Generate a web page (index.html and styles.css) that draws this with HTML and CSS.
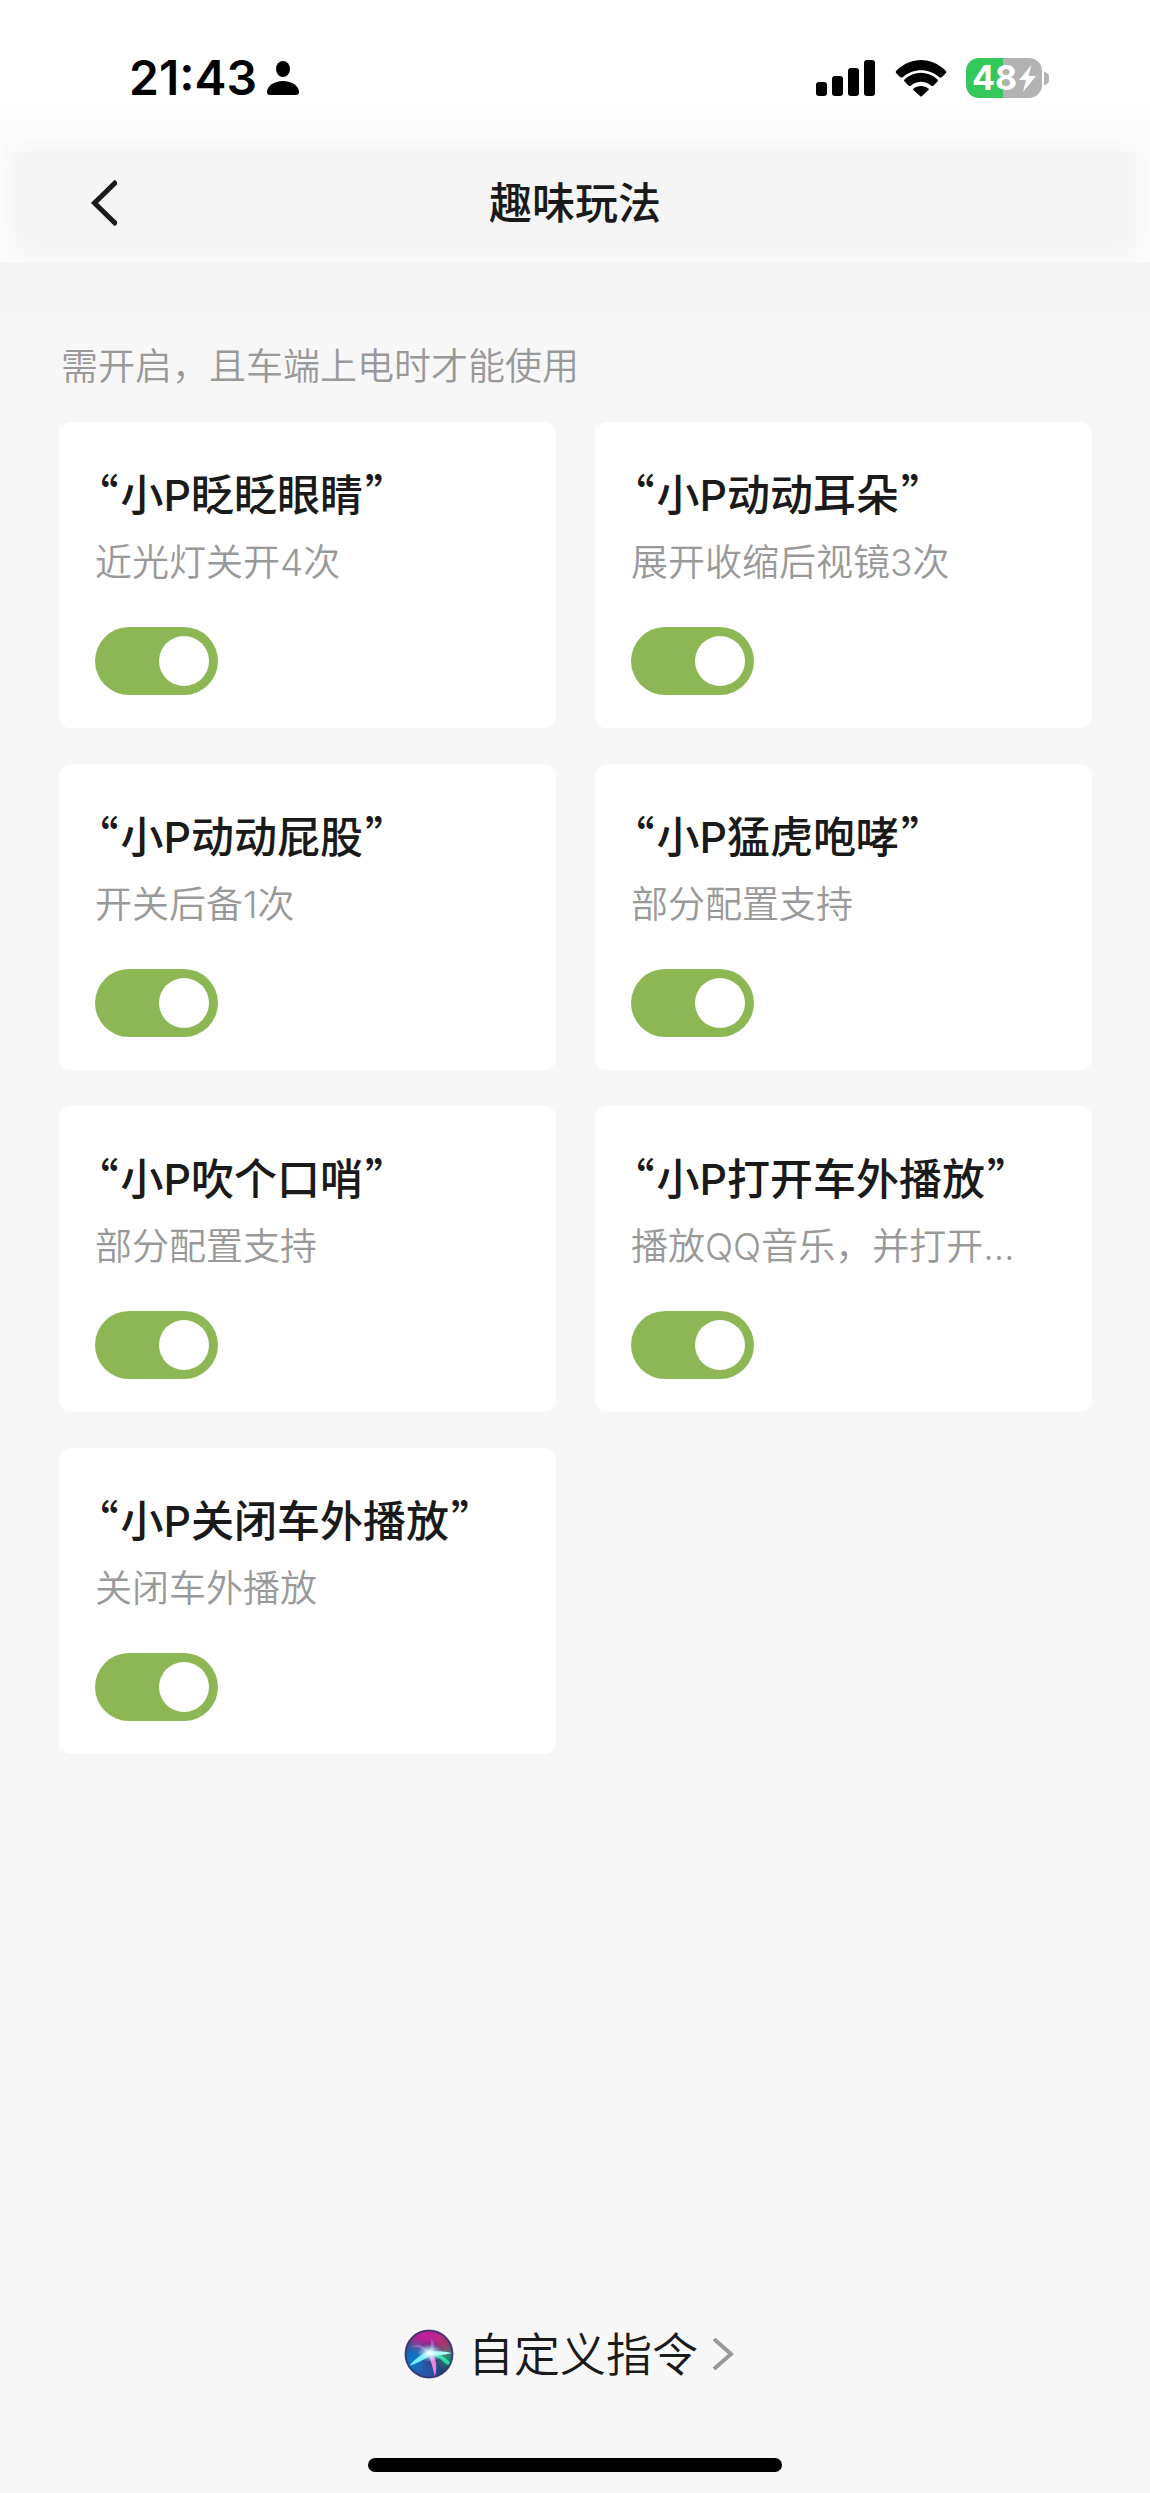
FILE: index.html
```html
<!DOCTYPE html>
<html lang="zh-CN">
<head>
<meta charset="utf-8">
<meta name="viewport" content="width=device-width, initial-scale=1">
<title>趣味玩法</title>
<link rel="stylesheet" href="styles.css">
</head>
<body>
<div class="status">
  <div class="status-left">
    <span class="time">21:43</span>
    <svg width="32" height="34" viewBox="0 0 32 34" aria-hidden="true"><ellipse cx="16" cy="8" rx="7" ry="8"/><path d="M3 34C1 34 0 33 0 31C0 25 7 20 16 20S32 25 32 31C32 33 31 34 29 34Z"/></svg>
  </div>
  <div class="status-right">
    <svg width="60" height="38" viewBox="0 0 60 38" aria-hidden="true"><rect y="23" width="11" height="14" rx="3"/><rect x="16" y="17" width="11" height="20" rx="3"/><rect x="32" y="9" width="11" height="28" rx="3"/><rect x="48" y="1" width="11" height="36" rx="3"/></svg>
    <svg width="52" height="38" viewBox="0 0 52 38" aria-hidden="true"><path d="M1.500 11.500Q0 13 1.500 14.500L5 18Q6.500 19 8 18C18 9 34 9 44 18Q45.500 19 47 18L50.500 14.500Q52 13 50.500 11.500C36-2.500 16-2.500 1.500 11.500Z"/><path d="M9.500 20.500Q8.500 21.500 9.500 22.500L13.500 26.500Q14.500 27.500 16 26.500C22 21.500 30 21.500 36 26.500Q37.500 27.500 38.500 26.500L42.500 22.500Q43.500 21.500 42.500 20.500C33 11.500 19 11.500 9.500 20.500Z"/><path d="M18.500 29.500Q17.800 30.300 18.500 31L25 37Q26 38 27 37L33.500 31Q34.200 30.300 33.500 29.500C29.500 26 22.500 26 18.500 29.500Z"/></svg>
    <div class="battery">
      <span class="battery-body">48<svg width="17" height="27" viewBox="0 0 17 27" aria-hidden="true"><path d="M12.500 0L0 15H7L4 27L17 11H9.500Z"/></svg></span>
      <span class="battery-tip"></span>
    </div>
  </div>
</div>
<header class="nav">
  <button class="back" type="button" aria-label="返回"><svg width="28" height="46" viewBox="0 0 28 46" aria-hidden="true"><path d="M27.500 1.500L5.500 23L27.500 44.500"/></svg></button>
  <h1>趣味玩法</h1>
</header>
<main>
  <p class="hint">需开启，且车端上电时才能使用</p>
  <div class="grid">
    <section class="card"><h2><label for="s1"><span class="quote">“</span>小P眨眨眼睛<span class="quote">”</span></label></h2><p>近光灯关开4次</p><input id="s1" type="checkbox" role="switch" checked></section>
    <section class="card"><h2><label for="s2"><span class="quote">“</span>小P动动耳朵<span class="quote">”</span></label></h2><p>展开收缩后视镜3次</p><input id="s2" type="checkbox" role="switch" checked></section>
    <section class="card"><h2><label for="s3"><span class="quote">“</span>小P动动屁股<span class="quote">”</span></label></h2><p>开关后备1次</p><input id="s3" type="checkbox" role="switch" checked></section>
    <section class="card"><h2><label for="s4"><span class="quote">“</span>小P猛虎咆哮<span class="quote">”</span></label></h2><p>部分配置支持</p><input id="s4" type="checkbox" role="switch" checked></section>
    <section class="card"><h2><label for="s5"><span class="quote">“</span>小P吹个口哨<span class="quote">”</span></label></h2><p>部分配置支持</p><input id="s5" type="checkbox" role="switch" checked></section>
    <section class="card"><h2><label for="s6"><span class="quote">“</span>小P打开车外播放<span class="quote">”</span></label></h2><p>播放QQ音乐，并打开…</p><input id="s6" type="checkbox" role="switch" checked></section>
    <section class="card"><h2><label for="s7"><span class="quote">“</span>小P关闭车外播放<span class="quote">”</span></label></h2><p>关闭车外播放</p><input id="s7" type="checkbox" role="switch" checked></section>
  </div>
</main>
<footer>
  <a class="custom" href="#custom">
    <svg width="50" height="50" viewBox="0 0 50 50" aria-hidden="true">
      <defs>
        <clipPath id="orb"><circle cx="25" cy="25" r="24"/></clipPath>
        <filter id="soft" x="-50%" y="-50%" width="200%" height="200%"><feGaussianBlur stdDeviation="4"/></filter>
        <filter id="fine" x="-50%" y="-50%" width="200%" height="200%"><feGaussianBlur stdDeviation="0.7"/></filter>
        <radialGradient id="glow"><stop offset="0" stop-color="#fff"/><stop offset=".35" stop-color="#d4fbff" stop-opacity=".8"/><stop offset="1" stop-color="#8ceeff" stop-opacity="0"/></radialGradient>
      </defs>
      <g clip-path="url(#orb)">
        <rect width="50" height="50" fill="#3a3c7c"/>
        <g filter="url(#soft)"><ellipse cx="24" cy="7" rx="19" ry="9" fill="#c71c9b"/><ellipse cx="39" cy="14" rx="8" ry="7" fill="#b93465"/><ellipse cx="9" cy="31" rx="11" ry="14" fill="#0874c4"/><ellipse cx="24" cy="43" rx="10" ry="7" fill="#2759b0"/><ellipse cx="44" cy="29" rx="8" ry="7" fill="#0c9a78"/><ellipse cx="40" cy="41" rx="8" ry="7" fill="#234269"/></g>
        <g filter="url(#fine)"><path d="M24 25Q16 16 7 18Q18 12 25 24Q28 14 27 9Q34 18 27 24Z" fill="#b879db" opacity=".6"/><path d="M25 22Q13 27 5 37Q17 33 27 26Z" fill="#77ecff"/><path d="M24 24Q28 35 31 48Q35 32 27 23Z" fill="#ed83dc"/><path d="M26 22Q35 22 46 33Q46 38 41 34Q34 27 26 26Z" fill="#35d7a2"/><path d="M25 23Q37 21 48 24Q38 27 26 26Z" fill="#a9fff1"/></g>
        <ellipse cx="26" cy="24" rx="13" ry="9" fill="url(#glow)"/>
      </g>
      <circle cx="25" cy="25" r="23.500" fill="none" stroke="#353268" stroke-width="2" opacity=".75"/>
    </svg>
    <span>自定义指令</span>
    <svg class="chevron" width="22" height="32" viewBox="0 0 22 32" aria-hidden="true"><path d="M2 1L19 16L2 31"/></svg>
  </a>
  <div class="home"></div>
</footer>
</body>
</html>
```
FILE: styles.css
```css
* { box-sizing: border-box; }
body {
  margin: 0;
  min-height: 100vh;
  display: flex;
  flex-direction: column;
  background: #f7f7f7;
  color: #1a1a1a;
  font-family: Inter, "Noto Sans CJK SC", sans-serif;
}
h1, h2, p { margin: 0; }
svg { display: block; flex: none; }
.status {
  height: 130px;
  padding: 48px 101px 22px 129px;
  display: flex;
  justify-content: space-between;
  align-items: center;
  background: linear-gradient(#fff 80%, #fcfcfc);
  color: #000;
}
.status-left { display: flex; align-items: center; gap: 10px; }
.time { font-size: 48px; line-height: 60px; font-weight: 600; }
.status-right { display: flex; align-items: center; gap: 19px; }
.battery { display: flex; align-items: center; gap: 2px; }
.battery-body {
  width: 76px;
  height: 40px;
  border-radius: 13px;
  display: flex;
  align-items: center;
  justify-content: center;
  gap: 2px;
  background: linear-gradient(90deg, #34c759 49%, #b3b3b3 49%);
  color: #fff;
  font-size: 34px;
  line-height: 40px;
  font-weight: 700;
}
.battery-body svg { fill: #fff; }
.battery-tip { width: 5px; height: 13px; border-radius: 0 6px 6px 0; background: #b3b3b3; }
.nav {
  height: 132px;
  padding: 14px 89px 0;
  display: grid;
  grid-template-columns: 28px 1fr 28px;
  align-items: center;
  background: #f5f5f5;
  box-shadow: inset 0 0 32px #fdfdfd, inset 0 10px 24px #fdfdfd;
}
.back { padding: 0; border: 0; background: none; }
.back path { fill: none; stroke: #1a1a1a; stroke-width: 5; }
.nav h1 { text-align: center; font-size: 43px; line-height: 60px; font-weight: 500; }
main { padding: 75px 58px 60px 59px; background: linear-gradient(#f4f4f4, #f7f7f7 80px); }
.hint { padding-left: 2px; margin-bottom: 25px; font-size: 37px; line-height: 60px; font-weight: 350; color: #999; }
.grid { display: grid; grid-template-columns: 1fr 1fr; gap: 36px 39px; }
.card {
  min-width: 0;
  padding: 43px 36px 33px;
  border-radius: 12px;
  background: #fff;
}
.card h2 { font-size: 43px; line-height: 60px; font-weight: 500; white-space: nowrap; }
/* Chinese quotation marks, set half-width beside the title */
.quote {
  margin: 0 2px;
  font-family: "Noto Sans CJK SC", sans-serif;
  font-feature-settings: "halt";
  line-height: 40px;
}
.card p { margin: 8px 0 34px; font-size: 37px; line-height: 60px; font-weight: 350; color: #999; white-space: nowrap; }
.card input {
  appearance: none;
  display: flex;
  align-items: center;
  width: 123px;
  height: 68px;
  margin: 0;
  padding: 9px;
  border-radius: 34px;
  background: #ccc;
}
.card input::before { content: ""; width: 50px; height: 50px; border-radius: 50%; background: #fff; }
.card input:checked { justify-content: flex-end; background: #8db755; }
footer {
  margin-top: auto;
  padding-bottom: 21px;
  display: flex;
  flex-direction: column;
  align-items: center;
  gap: 74px;
}
.custom {
  display: flex;
  align-items: center;
  gap: 14px;
  padding-right: 12px;
  color: #1a1a1a;
  font-size: 46px;
  line-height: 60px;
  font-weight: 350;
  text-decoration: none;
}
.chevron path { fill: none; stroke: #999; stroke-width: 4; }
.home { width: 36%; height: 14px; border-radius: 7px; background: #000; }
```
